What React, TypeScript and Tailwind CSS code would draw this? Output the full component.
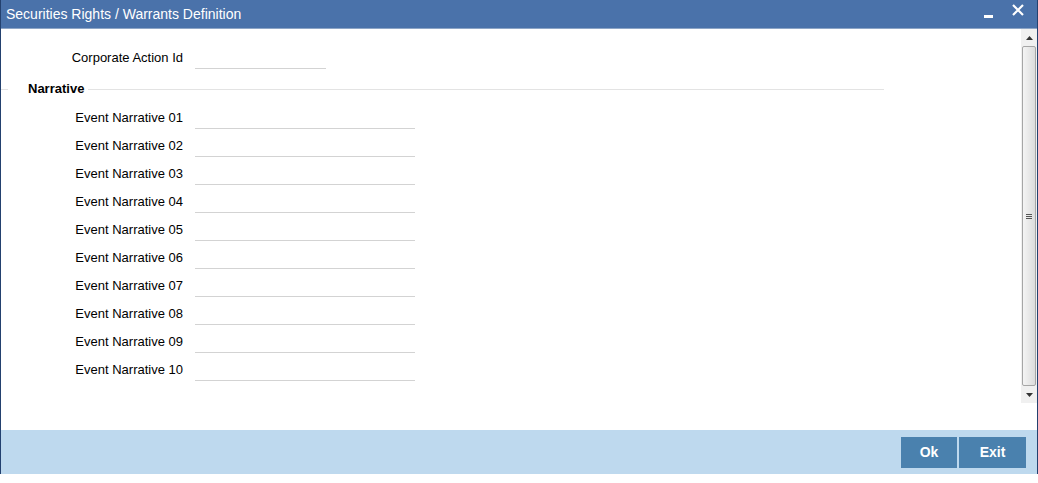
// Securities Rights / Warrants Definition window
const rows = ["01", "02", "03", "04", "05", "06", "07", "08", "09", "10"];

function Field({ label, width }: { label: string; width: string }) {
  return (
    <div className="flex items-center h-[28px]">
      <label className="w-[182px] text-right text-[13px] text-black">{label}</label>
      <div className={`ml-[12px] h-[20px] mt-[2px] border-b border-[#d3d3d3] ${width}`} />
    </div>
  );
}

function Scrollbar() {
  return (
    <div className="w-[16px] h-[374px] bg-[#f0f0f0] flex flex-col items-center">
      <div className="h-[17px] w-full flex items-center justify-center">
        <svg width="7" height="4" viewBox="0 0 7 4"><path d="M0 4 L3.5 0 L7 4 Z" fill="#333" /></svg>
      </div>
      <div className="flex-1 w-[14px] rounded-[2px] border border-[#a6a6a6] bg-gradient-to-r from-[#f4f4f4] to-[#dcdcdc] flex items-center justify-center">
        <div className="flex flex-col gap-[1px]">
          <div className="w-[6px] h-px bg-[#555]" />
          <div className="w-[6px] h-px bg-[#555]" />
          <div className="w-[6px] h-px bg-[#555]" />
        </div>
      </div>
      <div className="h-[17px] w-full flex items-center justify-center">
        <svg width="7" height="4" viewBox="0 0 7 4"><path d="M0 0 L7 0 L3.5 4 Z" fill="#333" /></svg>
      </div>
    </div>
  );
}

export default function App() {
  return (
    <div className="w-[1038px] h-[483px] bg-white" style={{ fontFamily: '"Liberation Sans", Arial, sans-serif' }}>
      <div className="h-[474px] border-l border-r border-[#23416f] flex flex-col">
        {/* Title bar */}
        <div className="h-[29px] bg-[#4a72aa] border-b border-[#8da5c6] flex items-center pl-[5px] pr-[13px]">
          <span className="text-white text-[14px]">Securities Rights / Warrants Definition</span>
          <div className="ml-auto flex items-center gap-[19px]">
            <div className="w-[9px] h-[3px] bg-white mt-[5px]" />
            <svg width="12" height="12" viewBox="0 0 12 12" className="mb-[9px]">
              <path d="M1 1 L11 11 M11 1 L1 11" stroke="white" strokeWidth="2.2" />
            </svg>
          </div>
        </div>

        {/* Body */}
        <div className="flex-1 flex">
          <div className="flex-1 pt-[15px]">
            <Field label="Corporate Action Id" width="w-[131px]" />
            <div className="mt-[3px] h-[28px] flex items-center w-[883px]">
              <div className="w-[7px] h-px bg-[#e3e3e3]" />
              <span className="ml-[20px] text-[13px] font-bold text-black">Narrative</span>
              <div className="ml-[4px] flex-1 h-px bg-[#e3e3e3]" />
            </div>
            <div className="mt-[1px]">
              {rows.map((n) => (
                <Field key={n} label={`Event Narrative ${n}`} width="w-[220px]" />
              ))}
            </div>
          </div>
          <Scrollbar />
        </div>

        {/* Footer */}
        <div className="h-[44px] bg-[#bed9ee] flex items-center justify-end pr-[11px] gap-[2px]">
          <button className="w-[56px] h-[31px] bg-[#4a81ae] text-white font-bold text-[14px]">Ok</button>
          <button className="w-[67px] h-[31px] bg-[#4a81ae] text-white font-bold text-[14px]">Exit</button>
        </div>
      </div>
    </div>
  );
}
